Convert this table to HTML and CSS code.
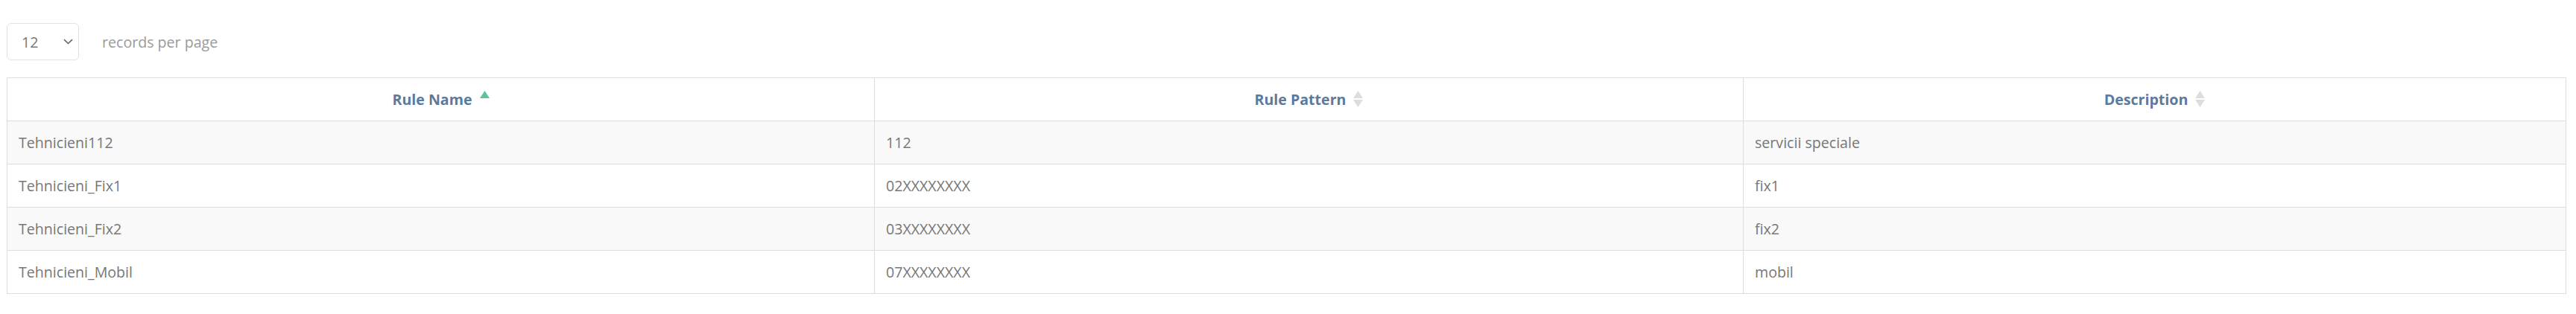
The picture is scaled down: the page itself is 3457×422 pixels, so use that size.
FILE: index.html
```html
<!DOCTYPE html>
<html>
<head>
<meta charset="utf-8">
<link rel="stylesheet" href="styles.css">
</head>
<body>
<div class="page">
  <div class="toolbar">
    <div class="select">
      <span class="select-value">12</span>
      <svg class="chevron" width="13" height="8" viewBox="0 0 13 8"><path d="M1 1.2 L6.5 6.5 L12 1.2" fill="none" stroke="#666" stroke-width="1.6"/></svg>
    </div>
    <span class="per-page">records per page</span>
  </div>
  <table class="grid">
    <colgroup>
      <col class="c1"><col class="c2"><col class="c3">
    </colgroup>
    <thead>
      <tr>
        <th><span class="th-label">Rule Name</span><svg class="sort" width="13" height="22" viewBox="0 0 13 22"><path d="M6.5 0 L13 10 L0 10 Z" fill="#5cc69b"/></svg></th>
        <th><span class="th-label">Rule Pattern</span><svg class="sort" width="13" height="22" viewBox="0 0 13 22"><path d="M6.5 0 L13 10 L0 10 Z" fill="#dddddd"/><path d="M0 12 L13 12 L6.5 22 Z" fill="#dddddd"/></svg></th>
        <th><span class="th-label">Description</span><svg class="sort" width="13" height="22" viewBox="0 0 13 22"><path d="M6.5 0 L13 10 L0 10 Z" fill="#dddddd"/><path d="M0 12 L13 12 L6.5 22 Z" fill="#dddddd"/></svg></th>
      </tr>
    </thead>
    <tbody>
      <tr><td>Tehnicieni112</td><td>112</td><td>servicii speciale</td></tr>
      <tr><td>Tehnicieni_Fix1</td><td>02XXXXXXXX</td><td>fix1</td></tr>
      <tr><td>Tehnicieni_Fix2</td><td>03XXXXXXXX</td><td>fix2</td></tr>
      <tr><td>Tehnicieni_Mobil</td><td>07XXXXXXXX</td><td>mobil</td></tr>
    </tbody>
  </table>
</div>
</body>
</html>
```

FILE: styles.css
```css
html, body {
  margin: 0;
  padding: 0;
  background: #ffffff;
}

body {
  font-family: "Open Sans", "Liberation Sans", sans-serif;
  font-size: 19.6px;
  color: #777777;
}

.page {
  padding: 31px 13px 0 9px;
}

.toolbar {
  display: flex;
  align-items: center;
  gap: 31px;
  height: 50px;
}

.select {
  box-sizing: border-box;
  width: 97px;
  height: 50px;
  border: 1px solid #e2e2e2;
  border-radius: 6px;
  display: flex;
  align-items: center;
  justify-content: space-between;
  padding: 0 7px 0 19px;
  color: #777777;
}

.chevron {
  display: block;
}

.per-page {
  color: #9a9a9a;
}

.grid {
  margin-top: 23px;
  width: 100%;
  border-collapse: collapse;
  table-layout: fixed;
  border: 1px solid #dddddd;
}

.c1 { width: 1164px; }
.c2 { width: 1166px; }
.c3 { width: auto; }

.grid th,
.grid td {
  border: 1px solid #dddddd;
  height: 58px;
  box-sizing: border-box;
  padding: 0 15px;
  vertical-align: middle;
}

.grid th {
  text-align: center;
  font-weight: 700;
  color: #5b7a9e;
  white-space: nowrap;
}

.grid th .sort {
  display: inline-block;
  vertical-align: middle;
  margin-left: 10px;
  position: relative;
  top: -3px;
}

.grid td {
  text-align: left;
  color: #777777;
}

.grid tbody tr:nth-child(odd) td {
  background: #f9f9f9;
}
```
